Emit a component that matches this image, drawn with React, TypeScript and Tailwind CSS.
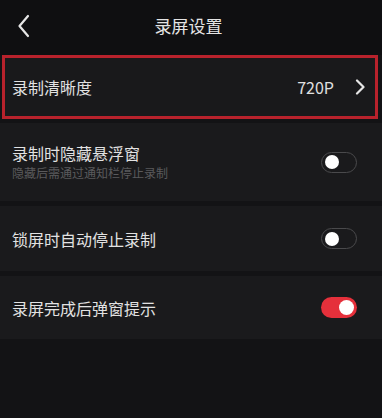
import React from "react";

function Toggle({ on }: { on: boolean }) {
  return on ? (
    <div className="w-[36px] h-[21px] rounded-full bg-[#e5303b] flex items-center justify-end pr-[3px]">
      <div className="w-[15px] h-[15px] rounded-full bg-white" />
    </div>
  ) : (
    <div className="w-[36px] h-[21px] rounded-full border-[1.5px] border-[#4a4a4c] flex items-center pl-[3px]">
      <div className="w-[14px] h-[14px] rounded-full bg-white" />
    </div>
  );
}

export default function App() {
  return (
    <div
      className="w-[382px] h-[418px] bg-[#131315] flex flex-col text-[#e2e2e2]"
      style={{ fontFamily: '"Noto Sans CJK SC", "Noto Sans", sans-serif' }}
    >
      <div className="h-[52px] bg-[#0f0f11] flex items-center relative">
        <svg className="ml-[17px]" width="14" height="24" viewBox="0 0 14 24" fill="none">
          <path d="M11 2 L2.5 12 L11 22" stroke="#e6e6e6" strokeWidth="2.2" strokeLinecap="round" strokeLinejoin="round" />
        </svg>
        <div className="absolute left-0 right-0 top-0 h-[52px] flex items-center justify-center pr-[5px] text-[17px] text-[#e4e4e4] pointer-events-none">
          录屏设置
        </div>
      </div>
      <div className="bg-[#0f0f11] h-[3px]" />
      <div className="ml-[2px] w-[376px] h-[64px] border-[3px] border-[#b8222c] bg-[#19191b] flex items-center pl-[7px] pr-[9px]">
        <div className="text-[16px] flex-1">录制清晰度</div>
        <div className="text-[16px] text-[#e0e0e0] mr-[21px]">720P</div>
        <svg width="11" height="16" viewBox="0 0 11 16" fill="none">
          <path d="M2 1.5 L8.5 8 L2 14.5" stroke="#e6e6e6" strokeWidth="2.2" strokeLinecap="round" strokeLinejoin="round" />
        </svg>
      </div>
      <div className="h-[4px]" />
      <div className="h-[78px] bg-[#1a1a1c] flex items-center pl-[12px] pr-[25px]">
        <div className="flex-1 flex flex-col">
          <div className="text-[16px] leading-[22px]">录制时隐藏悬浮窗</div>
          <div className="text-[12px] leading-[18px] text-[#5a5a5c]">隐藏后需通过通知栏停止录制</div>
        </div>
        <Toggle on={false} />
      </div>
      <div className="h-[5px]" />
      <div className="h-[65px] bg-[#1a1a1c] flex items-center pl-[12px] pr-[25px]">
        <div className="flex-1 text-[16px]">锁屏时自动停止录制</div>
        <Toggle on={false} />
      </div>
      <div className="h-[5px]" />
      <div className="h-[63px] bg-[#1a1a1c] flex items-center pl-[12px] pr-[25px]">
        <div className="flex-1 text-[16px]">录屏完成后弹窗提示</div>
        <Toggle on={true} />
      </div>
    </div>
  );
}
